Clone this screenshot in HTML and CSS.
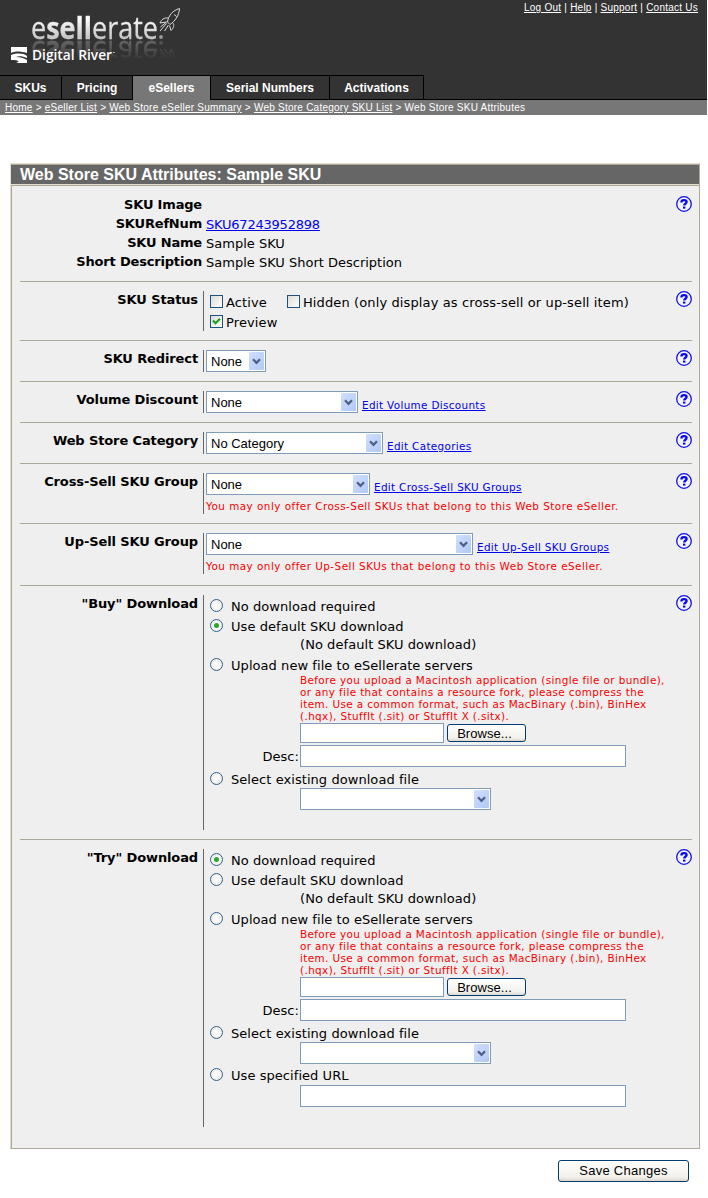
FILE: index.html
```
<!DOCTYPE html>
<html lang="en">
<head>
<meta charset="utf-8">
<title>Web Store SKU Attributes</title>
<link rel="stylesheet" href="styles.css">
</head>
<body>
<svg class="defs" width="0" height="0">
  <symbol id="help" viewBox="0 0 16 16">
    <circle cx="8" cy="8" r="7.3" fill="#f4f4fa" stroke="#1010f0" stroke-width="1.3"/>
    <path d="M5.400 6.500C5.400 4.700 6.500 4.200 8 4.200s2.600.6 2.600 1.900c0 1.700-2.400 1.700-2.400 3.500" fill="none" stroke="#0808f0" stroke-width="2.300"/>
    <rect x="7" y="10.600" width="2.400" height="2" fill="#0808f0"/>
  </symbol>
  <symbol id="chev" viewBox="0 0 9 7"><path d="M1 1.3l3.5 3.5L8 1.3" fill="none" stroke="#4d6185" stroke-width="2.3"/></symbol>
</svg>
<div class="page">
  <header class="header">
    <div class="logo">
      <svg class="wordmark" width="200" height="40" viewBox="0 0 200 40">
        <defs>
          <linearGradient id="silver" x1="0" y1="0" x2="0" y2="1"><stop offset=".3" stop-color="#fff"/><stop offset=".85" stop-color="#bbb"/></linearGradient>
        </defs>
        <text class="brand" x="31" y="38.500" textLength="127" lengthAdjust="spacingAndGlyphs" fill="url(#silver)">e<tspan class="heavy">sell</tspan>erate</text>
        <circle cx="161" cy="37" r="1.900" fill="#999"/>
        <g fill="none" stroke="#ddd" stroke-width="1">
          <path d="M179.500 8.500C173 10.500 168.500 15 167.500 22l2.500 2.500C175 21 179 16 179.500 8.500z"/>
          <path d="M168 18c-4-.5-6.500 1.500-8 5l6.500-1M172.500 22.500c2.500 2.500 1 5.500-1.500 8l-1.500-5"/>
          <path d="M166.500 23.500l-6.500 7.500M168.500 25l-4 6M174 14.500l2.500 2M160.500 27l6-5"/>
        </g>
      </svg>
      <svg class="company" width="200" height="30" viewBox="0 40 200 30">
        <path d="M11 47h16v6c-7-2-12-2-16 0z" fill="#fff"/>
        <path d="M11 55c6-2 12-2 16 1v2c-5-2-8-2-11-1 4 0 8 1 11 3v3H16c4-1 4-3-5-3z" fill="#fff"/>
        <text class="river" x="32" y="60" textLength="80" lengthAdjust="spacingAndGlyphs">Digital River</text>
        <path d="M113 52.500h2" stroke="#aaa"/>
      </svg>
    </div>
    <nav class="links"><a>Log Out</a> | <a>Help</a> | <a>Support</a> | <a>Contact Us</a></nav>
    <nav class="tabs">
      <a class="tab t1">SKUs</a><a class="tab t2">Pricing</a><a class="tab t3 active">eSellers</a><a class="tab t4">Serial Numbers</a><a class="tab t5">Activations</a>
    </nav>
  </header>
  <div class="crumbs"><a>Home</a> &gt; <a>eSeller List</a> &gt; <a>Web Store eSeller Summary</a> &gt; <a>Web Store Category SKU List</a> &gt; Web Store SKU Attributes</div>

  <main class="panel">
    <h1 class="title">Web Store SKU Attributes: Sample SKU</h1>
    <div class="body">
      <section class="info">
        <dl class="facts">
          <dt>SKU Image</dt><dd></dd>
          <dt>SKURefNum</dt><dd><a class="link refnum">SKU67243952898</a></dd>
          <dt>SKU Name</dt><dd>Sample SKU</dd>
          <dt>Short Description</dt><dd>Sample SKU Short Description</dd>
        </dl>
        <svg class="help"><use href="#help"/></svg>
      </section>

      <section class="row status">
        <div class="label">SKU Status</div>
        <div class="field">
          <div class="checks"><i class="box"></i><span class="active-text">Active</span><i class="box"></i><span>Hidden (only display as cross-sell or up-sell item)</span></div>
          <div class="checks"><i class="box"><svg width="11" height="11" viewBox="0 0 11 11"><path d="M2 4.500l2.500 2.700L9 2.700" fill="none" stroke="#21a121" stroke-width="2.200"/></svg></i><span>Preview</span></div>
        </div>
        <svg class="help"><use href="#help"/></svg>
      </section>

      <section class="row">
        <div class="label">SKU Redirect</div>
        <div class="field line"><div class="select w60">None<b class="arrow"><svg width="9" height="7"><use href="#chev"/></svg></b></div></div>
        <svg class="help"><use href="#help"/></svg>
      </section>
      <section class="row">
        <div class="label">Volume Discount</div>
        <div class="field line"><div class="select w152">None<b class="arrow"><svg width="9" height="7"><use href="#chev"/></svg></b></div><a class="link small">Edit Volume Discounts</a></div>
        <svg class="help"><use href="#help"/></svg>
      </section>
      <section class="row">
        <div class="label">Web Store Category</div>
        <div class="field line"><div class="select w177">No Category<b class="arrow"><svg width="9" height="7"><use href="#chev"/></svg></b></div><a class="link small">Edit Categories</a></div>
        <svg class="help"><use href="#help"/></svg>
      </section>
      <section class="row">
        <div class="label">Cross-Sell SKU Group</div>
        <div class="field">
          <div class="line"><div class="select w164">None<b class="arrow"><svg width="9" height="7"><use href="#chev"/></svg></b></div><a class="link small">Edit Cross-Sell SKU Groups</a></div>
          <p class="note">You may only offer Cross-Sell SKUs that belong to this Web Store eSeller.</p>
        </div>
        <svg class="help"><use href="#help"/></svg>
      </section>
      <section class="row upsell">
        <div class="label">Up-Sell SKU Group</div>
        <div class="field">
          <div class="line"><div class="select w267">None<b class="arrow"><svg width="9" height="7"><use href="#chev"/></svg></b></div><a class="link small">Edit Up-Sell SKU Groups</a></div>
          <p class="note">You may only offer Up-Sell SKUs that belong to this Web Store eSeller.</p>
        </div>
        <svg class="help"><use href="#help"/></svg>
      </section>

      <section class="row">
        <div class="label">"Buy" Download</div>
        <div class="field download">
          <div class="option"><i class="radio"></i>No download required</div>
          <div class="option"><i class="radio on"></i>Use default SKU download</div>
          <div class="indent none">(No default SKU download)</div>
          <div class="option"><i class="radio"></i>Upload new file to eSellerate servers</div>
          <p class="indent warn">Before you upload a Macintosh application (single file or bundle),<br>or any file that contains a resource fork, please compress the<br>item. Use a common format, such as MacBinary (.bin), BinHex<br>(.hqx), StuffIt (.sit) or StuffIt X (.sitx).</p>
          <div class="indent upload"><div class="input file"></div><div class="button browse">Browse...</div></div>
          <div class="desc"><span class="desc-label">Desc:</span><div class="input wide"></div></div>
          <div class="option existing"><i class="radio"></i>Select existing download file</div>
          <div class="indent"><div class="select w191"><b class="arrow"><svg width="9" height="7"><use href="#chev"/></svg></b></div></div>
        </div>
        <svg class="help"><use href="#help"/></svg>
      </section>

      <section class="row">
        <div class="label">"Try" Download</div>
        <div class="field download">
          <div class="option"><i class="radio on"></i>No download required</div>
          <div class="option"><i class="radio"></i>Use default SKU download</div>
          <div class="indent none">(No default SKU download)</div>
          <div class="option"><i class="radio"></i>Upload new file to eSellerate servers</div>
          <p class="indent warn">Before you upload a Macintosh application (single file or bundle),<br>or any file that contains a resource fork, please compress the<br>item. Use a common format, such as MacBinary (.bin), BinHex<br>(.hqx), StuffIt (.sit) or StuffIt X (.sitx).</p>
          <div class="indent upload"><div class="input file"></div><div class="button browse">Browse...</div></div>
          <div class="desc"><span class="desc-label">Desc:</span><div class="input wide"></div></div>
          <div class="option existing"><i class="radio"></i>Select existing download file</div>
          <div class="indent"><div class="select w191"><b class="arrow"><svg width="9" height="7"><use href="#chev"/></svg></b></div></div>
          <div class="option url"><i class="radio"></i>Use specified URL</div>
          <div class="indent"><div class="input wide"></div></div>
        </div>
        <svg class="help"><use href="#help"/></svg>
      </section>
    </div>
  </main>
  <div class="actions"><div class="button save">Save Changes</div></div>
</div>
</body>
</html>
```
FILE: styles.css
```
* { box-sizing: border-box; }
body { margin: 0; background: #fff; font: 13px/19px "DejaVu Sans", Verdana, sans-serif; color: #000; }
p, h1, dl, dd { margin: 0; }
svg { display: block; }
.defs { position: absolute; }
.page { width: 707px; height: 1198px; }

.header { height: 100px; background: #333; border-bottom: 1px solid #000; display: grid; grid-template: 74px 25px / 200px 1fr; }
.wordmark { -webkit-box-reflect: below 0 linear-gradient(transparent 50%, rgba(0, 0, 0, .35)); }
.company { position: relative; }
.brand { font: 400 31px "Open Sans", sans-serif; stroke: #ddd; stroke-width: .3px; }
.heavy { font-weight: 700; }
.river { font: 600 14.5px "Open Sans", sans-serif; fill: #fff; }
.links { justify-self: end; padding: 2px 9px 0 0; font: 10px/12px "Liberation Sans", Arial, sans-serif; letter-spacing: .24px; color: #fff; white-space: nowrap; }
.links a, .crumbs a { text-decoration: underline; }
.tabs { grid-column: 1 / 3; display: flex; height: 26px; border-top: 1px solid transparent; }
.tab { height: 25px; border-top: 1px solid #000; border-right: 1px solid #000; color: #fff; font: bold 12px/24px "Liberation Sans", Arial, sans-serif; text-align: center; }
.tab.active { background: #777; }
.t1 { width: 62px; } .t2 { width: 71px; } .t3 { width: 78px; } .t4 { width: 119px; } .t5 { width: 94px; }
.crumbs { height: 15px; background: #777; padding-left: 5px; color: #fff; font: 10px/15px "Liberation Sans", Arial, sans-serif; letter-spacing: .24px; white-space: nowrap; }

.panel { margin: 48px 0 0 10px; width: 690px; height: 986px; border: 1px solid #b0ab96; border-left-color: #e4dfcc; border-top-color: #e4dfcc; }
.title { height: 22px; border: 1px solid #aca899; border-width: 1px 0; background: #666; box-shadow: inset 0 -1px #e4dfcc; padding-left: 9px; color: #fff; font: bold 16px/19px "Liberation Sans", Arial, sans-serif; }
.body { height: 962px; background: #efefef; border-left: 1px solid #aca899; padding: 9px 7px 0 8px; }
.info { height: 86px; display: flex; justify-content: space-between; }
.info .help { margin-top: 1px; }
.facts { display: grid; grid-template-columns: 182px auto; grid-auto-rows: 19px; column-gap: 4px; }
.facts dt { text-align: right; font-weight: bold; letter-spacing: -.18px; }
.facts dd { padding-top: 1px; }
.help { width: 16px; height: 16px; }
.link { color: #0000f0; text-decoration: underline; }
.refnum { letter-spacing: -.22px; }
.row { border-top: 1px solid #aaa897; padding: 9px 0; display: grid; grid-template-columns: 183px 1fr 16px; }
.upsell { padding-bottom: 11px; }
.label { font-weight: bold; text-align: right; padding-right: 5px; line-height: 17px; letter-spacing: -.12px; }
.field { border-left: 1px solid #666; padding-left: 2px; }
.status .field { height: 40px; }
.checks { display: flex; align-items: center; height: 20px; padding-left: 4px; letter-spacing: .12px; }
.checks span { padding-top: 2px; }
.box { width: 13px; height: 13px; margin-right: 3px; border: 1px solid #1c5180; background: linear-gradient(135deg, #dcdcd7, #fff); }
.active-text { margin-right: 20px; }
.line { display: flex; gap: 4px; height: 22px; }
.small { font-size: 10.4px; line-height: 28px; height: 22px; letter-spacing: .34px; white-space: nowrap; }
.select { position: relative; height: 22px; border: 1px solid #7f9db9; background: #fff; font: 13px/21px "Liberation Sans", Arial, sans-serif; padding-left: 4px; }
.arrow { position: absolute; top: 1px; right: 1px; width: 15px; height: 18px; border-radius: 1px; background: linear-gradient(135deg, #d2dfff, #b0c8f7); display: grid; place-items: center; }
.w60 { width: 60px; } .w152 { width: 152px; } .w177 { width: 177px; } .w164 { width: 164px; } .w267 { width: 267px; } .w191 { width: 191px; }
.note { height: 19px; color: #f80000; font-size: 10.4px; line-height: 23px; letter-spacing: .48px; white-space: nowrap; }
.download { padding-top: 1px; padding-bottom: 20px; letter-spacing: .06px; }
.option { height: 20px; display: flex; align-items: center; padding-left: 4px; }
.radio { width: 13px; height: 13px; margin: 0 8px 2px 0; border: 1px solid #33618c; border-radius: 50%; background: radial-gradient(#fff, #e8e8e4); display: grid; place-items: center; }
.radio.on::after { content: ""; width: 5px; height: 5px; border-radius: 50%; background: #2aa62a; }
.indent { padding-left: 94px; }
.none { height: 19px; line-height: 17px; }
.warn { margin: -1px 0 1px; color: #f80000; font-size: 10.4px; line-height: 12px; letter-spacing: .39px; white-space: nowrap; }
.upload { display: flex; gap: 3px; height: 22px; }
.input { border: 1px solid #7f9db9; background: #fff; height: 22px; }
.input.file { width: 144px; height: 20px; }
.input.wide { width: 326px; }
.button { border: 1px solid #003c74; border-radius: 3px; background: linear-gradient(#fff, #f2f1ec 80%, #dcd8cc); font: 13px/17px "Liberation Sans", Arial, sans-serif; text-align: center; }
.browse { width: 79px; height: 18px; margin-top: 1px; line-height: 17px; padding-right: 4px; }
.desc { display: flex; height: 23px; }
.desc-label { width: 94px; padding-right: 1px; text-align: right; line-height: 23px; }
.existing { padding-top: 2px; }
.url { margin-top: 1px; }
.actions { display: flex; justify-content: flex-end; padding: 11px 18px 0 0; }
.save { width: 131px; height: 22px; line-height: 20px; letter-spacing: .25px; }
```
